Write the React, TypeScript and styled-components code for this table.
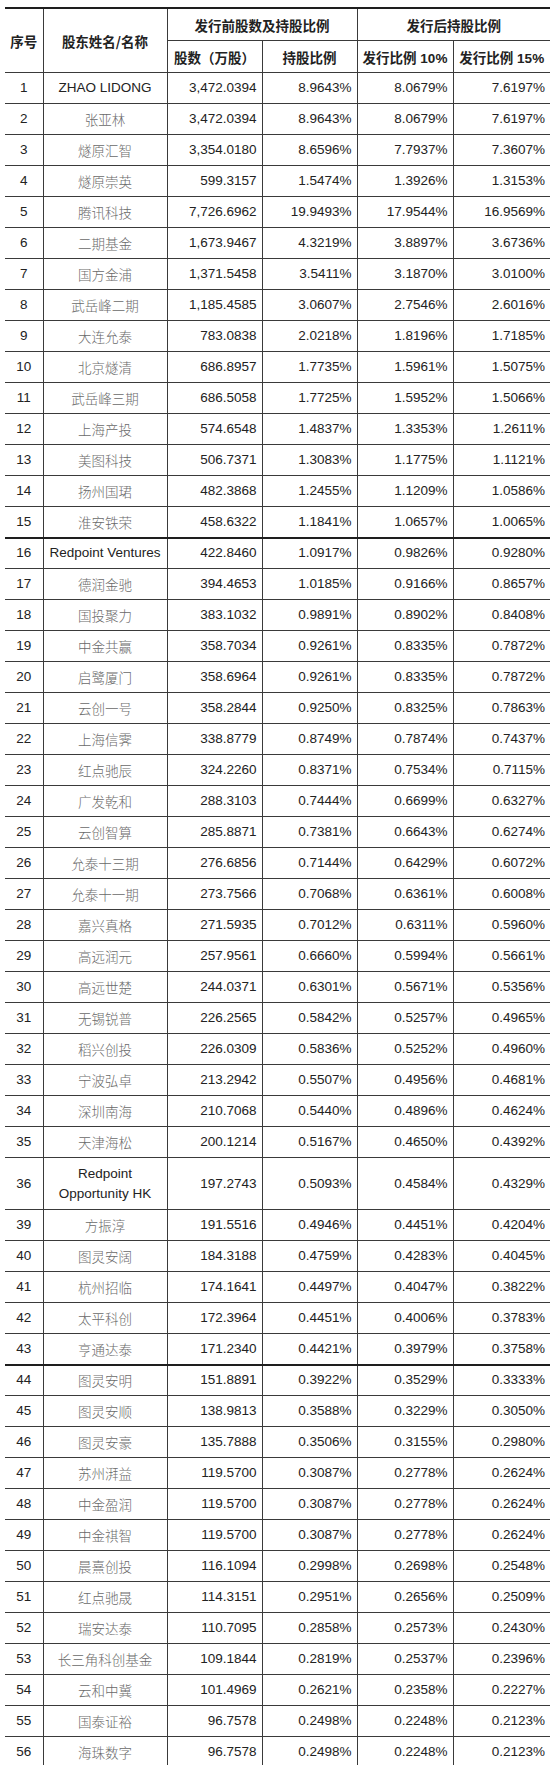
import * as React from 'react';
import styled, { createGlobalStyle } from 'styled-components';

type Row = [string, string, string, string, string, string];

// 序号, 名称, 股数, 持股比例, 10%, 15%
const section1: Row[] = [
  ['1', 'ZHAO LIDONG', '3,472.0394', '8.9643%', '8.0679%', '7.6197%'],
  ['2', '张亚林', '3,472.0394', '8.9643%', '8.0679%', '7.6197%'],
  ['3', '燧原汇智', '3,354.0180', '8.6596%', '7.7937%', '7.3607%'],
  ['4', '燧原崇英', '599.3157', '1.5474%', '1.3926%', '1.3153%'],
  ['5', '腾讯科技', '7,726.6962', '19.9493%', '17.9544%', '16.9569%'],
  ['6', '二期基金', '1,673.9467', '4.3219%', '3.8897%', '3.6736%'],
  ['7', '国方金浦', '1,371.5458', '3.5411%', '3.1870%', '3.0100%'],
  ['8', '武岳峰二期', '1,185.4585', '3.0607%', '2.7546%', '2.6016%'],
  ['9', '大连允泰', '783.0838', '2.0218%', '1.8196%', '1.7185%'],
  ['10', '北京燧清', '686.8957', '1.7735%', '1.5961%', '1.5075%'],
  ['11', '武岳峰三期', '686.5058', '1.7725%', '1.5952%', '1.5066%'],
  ['12', '上海产投', '574.6548', '1.4837%', '1.3353%', '1.2611%'],
  ['13', '美图科技', '506.7371', '1.3083%', '1.1775%', '1.1121%'],
  ['14', '扬州国珺', '482.3868', '1.2455%', '1.1209%', '1.0586%'],
  ['15', '淮安铁荣', '458.6322', '1.1841%', '1.0657%', '1.0065%'],
];

const section2: Row[] = [
  ['16', 'Redpoint Ventures', '422.8460', '1.0917%', '0.9826%', '0.9280%'],
  ['17', '德润金驰', '394.4653', '1.0185%', '0.9166%', '0.8657%'],
  ['18', '国投聚力', '383.1032', '0.9891%', '0.8902%', '0.8408%'],
  ['19', '中金共赢', '358.7034', '0.9261%', '0.8335%', '0.7872%'],
  ['20', '启鹭厦门', '358.6964', '0.9261%', '0.8335%', '0.7872%'],
  ['21', '云创一号', '358.2844', '0.9250%', '0.8325%', '0.7863%'],
  ['22', '上海信霁', '338.8779', '0.8749%', '0.7874%', '0.7437%'],
  ['23', '红点驰辰', '324.2260', '0.8371%', '0.7534%', '0.7115%'],
  ['24', '广发乾和', '288.3103', '0.7444%', '0.6699%', '0.6327%'],
  ['25', '云创智算', '285.8871', '0.7381%', '0.6643%', '0.6274%'],
  ['26', '允泰十三期', '276.6856', '0.7144%', '0.6429%', '0.6072%'],
  ['27', '允泰十一期', '273.7566', '0.7068%', '0.6361%', '0.6008%'],
  ['28', '嘉兴真格', '271.5935', '0.7012%', '0.6311%', '0.5960%'],
  ['29', '高远润元', '257.9561', '0.6660%', '0.5994%', '0.5661%'],
  ['30', '高远世楚', '244.0371', '0.6301%', '0.5671%', '0.5356%'],
  ['31', '无锡锐普', '226.2565', '0.5842%', '0.5257%', '0.4965%'],
  ['32', '稻兴创投', '226.0309', '0.5836%', '0.5252%', '0.4960%'],
  ['33', '宁波弘卓', '213.2942', '0.5507%', '0.4956%', '0.4681%'],
  ['34', '深圳南海', '210.7068', '0.5440%', '0.4896%', '0.4624%'],
  ['35', '天津海松', '200.1214', '0.5167%', '0.4650%', '0.4392%'],
  ['36', 'Redpoint Opportunity HK', '197.2743', '0.5093%', '0.4584%', '0.4329%'],
  ['39', '方振淳', '191.5516', '0.4946%', '0.4451%', '0.4204%'],
  ['40', '图灵安阔', '184.3188', '0.4759%', '0.4283%', '0.4045%'],
  ['41', '杭州招临', '174.1641', '0.4497%', '0.4047%', '0.3822%'],
  ['42', '太平科创', '172.3964', '0.4451%', '0.4006%', '0.3783%'],
  ['43', '亨通达泰', '171.2340', '0.4421%', '0.3979%', '0.3758%'],
];

const section3: Row[] = [
  ['44', '图灵安明', '151.8891', '0.3922%', '0.3529%', '0.3333%'],
  ['45', '图灵安顺', '138.9813', '0.3588%', '0.3229%', '0.3050%'],
  ['46', '图灵安豪', '135.7888', '0.3506%', '0.3155%', '0.2980%'],
  ['47', '苏州湃益', '119.5700', '0.3087%', '0.2778%', '0.2624%'],
  ['48', '中金盈润', '119.5700', '0.3087%', '0.2778%', '0.2624%'],
  ['49', '中金祺智', '119.5700', '0.3087%', '0.2778%', '0.2624%'],
  ['50', '晨熹创投', '116.1094', '0.2998%', '0.2698%', '0.2548%'],
  ['51', '红点驰晟', '114.3151', '0.2951%', '0.2656%', '0.2509%'],
  ['52', '瑞安达泰', '110.7095', '0.2858%', '0.2573%', '0.2430%'],
  ['53', '长三角科创基金', '109.1844', '0.2819%', '0.2537%', '0.2396%'],
  ['54', '云和中冀', '101.4969', '0.2621%', '0.2358%', '0.2227%'],
  ['55', '国泰证裕', '96.7578', '0.2498%', '0.2248%', '0.2123%'],
  ['56', '海珠数字', '96.7578', '0.2498%', '0.2248%', '0.2123%'],
];

const isLatin = (s: string) => /^[A-Za-z ]+$/.test(s);
// names too long for one line wrap to two lines and need a taller row
const isTall = (s: string) => isLatin(s) && s.length > 18;

const GlobalStyle = createGlobalStyle`
  html, body {
    margin: 0;
    padding: 0;
    background: #ffffff;
  }
  body {
    font-family: "Liberation Sans", Arial, "Noto Sans CJK SC", sans-serif;
    color: #222;
  }
`;

const Table = styled.table`
  margin: 7px 0 0 5px;
  width: 545px;
  table-layout: fixed;
  border-collapse: collapse;
  border-top: 2px solid #1e1e1e;
  font-size: 13.5px;
`;

const Th = styled.th`
  height: 31px;
  padding: 0;
  border: 1px solid #3a3a3a;
  font-family: "Liberation Sans", "Noto Sans CJK SC", sans-serif;
  font-weight: 700;
  font-size: 13.5px;
  color: #222;
  text-align: center;
  vertical-align: middle;
  white-space: nowrap;

  &:first-child {
    border-left: none;
  }
  &:last-child {
    border-right: none;
  }
`;

const EdgeTh = styled(Th)`
  border-right: none;
`;

const Tr = styled.tr<{ $break?: boolean; $tall?: boolean }>`
  height: ${(p) => (p.$tall ? '52px' : '31px')};

  & > td {
    border-top: ${(p) => (p.$break ? '2px solid #1e1e1e' : '1px solid #3a3a3a')};
  }
`;

const Td = styled.td<{ $align?: 'left' | 'center' | 'right' }>`
  padding: 0 5px 0 3px;
  border-left: 1px solid #3a3a3a;
  border-bottom: 1px solid #3a3a3a;
  text-align: ${(p) => p.$align ?? 'right'};
  vertical-align: middle;
  color: #222;
  line-height: 20px;

  &:first-child {
    border-left: none;
    padding: 0;
  }
`;

const NameTd = styled(Td)<{ $latin: boolean }>`
  padding: 0 2px;
  text-align: center;
  font-family: ${(p) =>
    p.$latin ? '"Liberation Sans", Arial, sans-serif' : '"Noto Sans CJK SC", sans-serif'};
  font-weight: ${(p) => (p.$latin ? 400 : 300)};
  color: ${(p) => (p.$latin ? '#222' : '#6a6a6a')};
`;

const Bold = styled.span`
  font-weight: 700;
`;

const HeadCn = styled.span`
  font-family: "Noto Sans CJK SC", sans-serif;
  font-weight: 700;
`;

const Section: React.FC<{ rows: Row[]; breakFirst?: boolean }> = ({ rows, breakFirst }) => (
  <>
    {rows.map((r, i) => (
      <Tr key={r[0]} $break={breakFirst && i === 0} $tall={isTall(r[1])}>
        <Td $align="center">{r[0]}</Td>
        <NameTd $latin={isLatin(r[1])}>{r[1]}</NameTd>
        <Td>{r[2]}</Td>
        <Td>{r[3]}</Td>
        <Td>{r[4]}</Td>
        <Td>{r[5]}</Td>
      </Tr>
    ))}
  </>
);

export default function App() {
  return (
    <>
      <GlobalStyle />
      <Table>
        <colgroup>
          <col style={{ width: 38 }} />
          <col style={{ width: 124 }} />
          <col style={{ width: 95 }} />
          <col style={{ width: 95 }} />
          <col style={{ width: 96 }} />
          <col style={{ width: 97 }} />
        </colgroup>
        <thead>
          <tr>
            <Th rowSpan={2}>
              <HeadCn>序号</HeadCn>
            </Th>
            <Th rowSpan={2}>
              <HeadCn>股东姓名/名称</HeadCn>
            </Th>
            <Th colSpan={2}>
              <HeadCn>发行前股数及持股比例</HeadCn>
            </Th>
            <EdgeTh colSpan={2}>
              <HeadCn>发行后持股比例</HeadCn>
            </EdgeTh>
          </tr>
          <tr>
            <Th style={{ borderLeft: '1px solid #3a3a3a' }}>
              <HeadCn>股数（万股）</HeadCn>
            </Th>
            <Th>
              <HeadCn>持股比例</HeadCn>
            </Th>
            <Th>
              <HeadCn>发行比例</HeadCn> <Bold>10%</Bold>
            </Th>
            <Th>
              <HeadCn>发行比例</HeadCn> <Bold>15%</Bold>
            </Th>
          </tr>
        </thead>
        <tbody>
          <Section rows={section1} />
          <Section rows={section2} breakFirst />
          <Section rows={section3} breakFirst />
        </tbody>
      </Table>
    </>
  );
}
